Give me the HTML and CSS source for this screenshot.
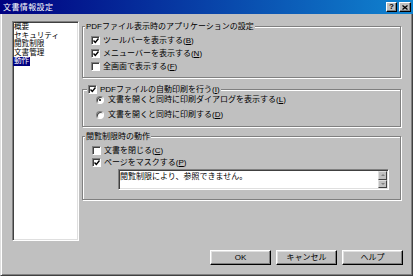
FILE: index.html
```html
<!DOCTYPE html>
<html lang="ja">
  <head>
    <meta charset="UTF-8" />
    <title>文書情報設定</title>
    <link rel="stylesheet" href="styles.css">
  </head>
  <body>
    <div class="window">
      <div class="titlebar">
        <span class="title">文書情報設定</span>
        <div class="caption-btns">
          <button class="cap-btn help">?</button>
          <button class="cap-btn close">
            <svg width="6" height="5" viewBox="0 0 6 5"><path d="M0.5 0.5l5 4M5.5 0.5l-5 4" stroke="#000" stroke-width="1.3"/></svg>
          </button>
        </div>
      </div>

      <div class="frame">
        <div class="main">
          <ul class="nav">
            <li>概要</li>
            <li>セキュリティ</li>
            <li>閲覧制限</li>
            <li>文書管理</li>
            <li><span class="sel">動作</span></li>
          </ul>

          <div class="settings">
            <fieldset class="group g-view">
              <legend><span>PDFファイル表示時のアプリケーションの設定</span></legend>
              <label class="row">
                <span class="check"><svg width="6" height="6" viewBox="0 0 6 6"><path d="M0.5 2.5l1.8 2 3.2-4" stroke="#000" stroke-width="1.4" fill="none"/></svg></span>
                <span>ツールバーを表示する(<u>B</u>)</span>
              </label>
              <label class="row">
                <span class="check"><svg width="6" height="6" viewBox="0 0 6 6"><path d="M0.5 2.5l1.8 2 3.2-4" stroke="#000" stroke-width="1.4" fill="none"/></svg></span>
                <span>メニューバーを表示する(<u>N</u>)</span>
              </label>
              <label class="row">
                <span class="check"></span>
                <span>全画面で表示する(<u>F</u>)</span>
              </label>
            </fieldset>

            <fieldset class="group g-print">
              <legend>
                <span class="check"><svg width="6" height="6" viewBox="0 0 6 6"><path d="M0.5 2.5l1.8 2 3.2-4" stroke="#000" stroke-width="1.4" fill="none"/></svg></span>
                <span>PDFファイルの自動印刷を行う(<u>I</u>)</span>
              </legend>
              <label class="row">
                <span class="radio on"></span>
                <span>文書を開くと同時に印刷ダイアログを表示する(<u>L</u>)</span>
              </label>
              <label class="row">
                <span class="radio"></span>
                <span>文書を開くと同時に印刷する(<u>D</u>)</span>
              </label>
            </fieldset>

            <fieldset class="group g-limit">
              <legend><span>閲覧制限時の動作</span></legend>
              <label class="row">
                <span class="check"></span>
                <span>文書を閉じる(<u>C</u>)</span>
              </label>
              <label class="row">
                <span class="check"><svg width="6" height="6" viewBox="0 0 6 6"><path d="M0.5 2.5l1.8 2 3.2-4" stroke="#000" stroke-width="1.4" fill="none"/></svg></span>
                <span>ページをマスクする(<u>P</u>)</span>
              </label>
              <div class="memo">
                <div class="memo-text">閲覧制限により、参照できません。</div>
                <div class="scroll">
                  <span class="arrow up"></span>
                  <span class="arrow down"></span>
                </div>
              </div>
            </fieldset>
          </div>
        </div>

        <div class="actions">
          <button class="btn">OK</button>
          <button class="btn">キャンセル</button>
          <button class="btn">ヘルプ</button>
        </div>
      </div>
    </div>
  </body>
</html>
```

FILE: styles.css
```css
*,
*::before,
*::after {
  margin: 0;
  padding: 0;
  box-sizing: border-box;
}

body {
  width: 413px;
  height: 276px;
  overflow: hidden;
  background: #c0c0c0;
  color: #000;
  font-family: "Liberation Sans", "Noto Sans CJK JP", sans-serif;
  font-size: 8px;
  line-height: 9px;
}

.window {
  width: 413px;
  height: 276px;
  display: flex;
  flex-direction: column;
}

/* title bar */
.titlebar {
  flex: none;
  height: 14px;
  display: flex;
  align-items: center;
  justify-content: space-between;
  padding: 0 2px 0 3px;
  background: linear-gradient(to right, #000080, #1084d0);
  color: #fff;
}
.title {
  letter-spacing: 0.4px;
}
.caption-btns {
  display: flex;
  gap: 2px;
}
.cap-btn {
  width: 11px;
  height: 10px;
  display: flex;
  align-items: center;
  justify-content: center;
  background: #c0c0c0;
  border: 1px solid;
  border-color: #fff #000 #000 #fff;
  box-shadow: inset -1px -1px #808080;
  color: #000;
  font: bold 8px/8px "Liberation Sans", sans-serif;
}
.cap-btn.close {
  width: 12px;
}

/* window body */
.frame {
  flex: 1;
  display: flex;
  flex-direction: column;
  border-style: solid;
  border-width: 0 1px 1px 1px;
  border-color: #dfdfdf #404040 #404040 #dfdfdf;
  box-shadow: inset 1px 0 #fff, inset -1px -1px #808080;
}
.main {
  display: flex;
  gap: 3px;
  padding: 7px 0 0 11px;
}

.nav {
  flex: none;
  width: 67px;
  height: 220px;
  list-style: none;
  padding: 1px 1px;
  font-size: 7.6px;
  line-height: 8.6px;
  background: #fff;
  border: 1px solid;
  border-color: #808080 #fff #fff #808080;
  box-shadow: inset 1px 1px #404040, inset -1px -1px #dfdfdf;
}
.nav li {
  white-space: nowrap;
}
.sel {
  display: inline-block;
  margin-left: -1px;
  padding: 0 1px;
  background: #000080;
  color: #fff;
}

.settings {
  width: 319px;
  margin-top: 1px;
  display: flex;
  flex-direction: column;
}

/* group boxes */
.group {
  border: 1px solid #808080;
  box-shadow: inset 1px 1px #fff, 1px 1px #fff;
  padding: 3px 0 4px 8px;
}
.group legend {
  display: flex;
  align-items: center;
  gap: 3px;
  height: 9px;
  margin-left: -6px;
  padding: 0 1px;
  background: #c0c0c0;
  white-space: nowrap;
}
.row {
  display: flex;
  align-items: center;
  gap: 3px;
  height: 13px;
  white-space: nowrap;
}

.g-print {
  margin-top: 7px;
  padding: 0 0 4px 13px;
}
.g-print legend {
  margin-left: -9px;
}
.g-print .row {
  height: 15px;
  gap: 4px;
}
.g-print .row:first-of-type {
  margin-top: -2px;
}

.g-limit {
  margin-top: 5px;
  padding: 3px 0 9px 9px;
}
.g-limit legend {
  margin-left: -7px;
}
.g-limit .row {
  height: 12px;
}

/* controls */
.check {
  flex: none;
  width: 9px;
  height: 9px;
  display: flex;
  align-items: center;
  justify-content: center;
  padding: 1px 0 0 1px;
  background: #fff;
  border: 1px solid;
  border-color: #808080 #fff #fff #808080;
  box-shadow: inset 1px 1px #404040;
}
.check svg {
  display: block;
}

.radio {
  flex: none;
  width: 8px;
  height: 8px;
  display: flex;
  align-items: center;
  justify-content: center;
  border-radius: 50%;
  background: #fff;
  border: 1px solid;
  border-color: #808080 #fff #fff #808080;
  box-shadow: inset 1px 1px #404040;
}
.radio.on::after {
  content: "";
  width: 2px;
  height: 2px;
  border-radius: 50%;
  background: #000;
}

.memo {
  width: 271px;
  height: 21px;
  margin: 1px 0 0 26px;
  display: flex;
  background: #fff;
  border: 1px solid;
  border-color: #808080 #fff #fff #808080;
  box-shadow: inset 1px 1px #404040, inset -1px -1px #dfdfdf;
}
.memo-text {
  flex: 1;
  padding: 2px 1px;
  white-space: nowrap;
}
.scroll {
  width: 9px;
  margin: 1px 1px 1px 0;
  display: flex;
  flex-direction: column;
}
.arrow {
  flex: 1;
  display: flex;
  align-items: center;
  justify-content: center;
  background: #c0c0c0;
  border: 1px solid;
  border-color: #dfdfdf #404040 #404040 #dfdfdf;
}
.arrow::after {
  content: "";
  border-left: 2px solid transparent;
  border-right: 2px solid transparent;
}
.arrow.up::after {
  border-bottom: 2px solid #808080;
}
.arrow.down::after {
  border-top: 2px solid #808080;
}

/* dialog buttons */
.actions {
  display: flex;
  justify-content: flex-end;
  gap: 5px;
  padding: 9px 9px 0 0;
}
.btn {
  width: 61px;
  height: 15px;
  background: #c0c0c0;
  border: 1px solid;
  border-color: #fff #000 #000 #fff;
  box-shadow: inset -1px -1px #808080, inset 1px 1px #dfdfdf;
  color: #000;
  font-family: "Liberation Sans", "Noto Sans CJK JP", sans-serif;
  font-size: 8px;
  line-height: 9px;
}
```
